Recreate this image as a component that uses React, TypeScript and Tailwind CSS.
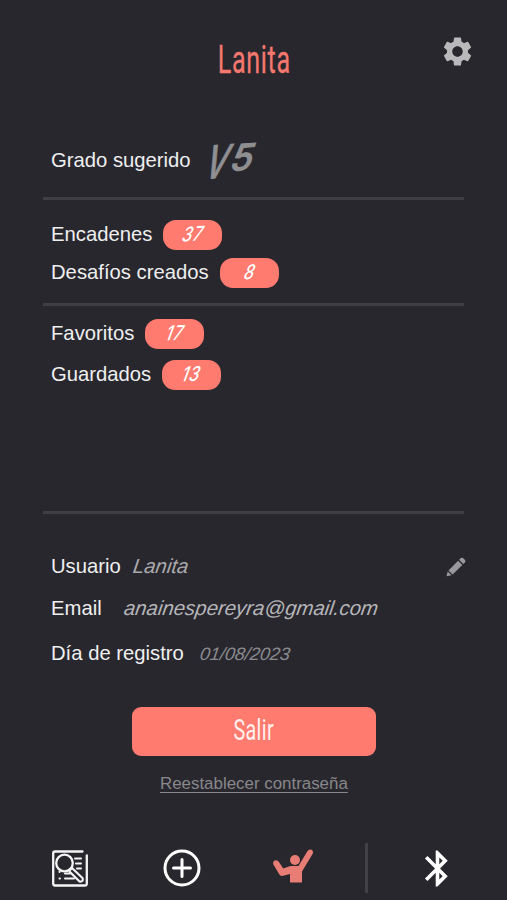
import type { ReactNode } from 'react';
import { MdSettings, MdBluetooth } from 'react-icons/md';

function Row({ label, labelWidth, className, children }: { label: string; labelWidth: string; className: string; children?: ReactNode }) {
  return (
    <div className={`flex items-center pl-[51px] pr-[41px] ${className}`}>
      <span className={`shrink-0 whitespace-nowrap pb-[2px] text-[20.25px] leading-[30px] text-[#efeff0] ${labelWidth}`}>{label}</span>
      {children}
    </div>
  );
}

function Pill({ value }: { value: string }) {
  return (
    <span className="flex h-[30px] w-[59px] shrink-0 items-center justify-center rounded-[13px] bg-[#ff7b6f]">
      <span className="inline-block -rotate-3 -skew-x-[28deg] scale-x-[0.8] pb-[1px] font-['Inter'] text-[20px] font-medium leading-[29px] tracking-[1px] text-white">{value}</span>
    </span>
  );
}

function Divider() {
  return <div className="ml-[43px] h-[3px] w-[421px] shrink-0 bg-[#3f3e44]" />;
}

function PencilIcon() {
  return (
    <svg width="20" height="20" viewBox="0 0 20 20" fill="#99999b">
      <path d="M.5 19.3 1.7 14.4 5.6 18.3Z" />
      <path d="M2.5 13.4 12.1 3.8 16.3 8 6.7 17.6Z" />
      <path d="M13.1 2.8 14.9 1.1Q16 .2 17 1.1L19 3.1Q19.9 4.1 19 5.2L17.3 7Z" />
    </svg>
  );
}

function SearchListIcon() {
  return (
    <svg width="36" height="37" viewBox="0 0 36 37" fill="none" stroke="#f4f4f5" strokeLinecap="round">
      <path d="M30.5 1.5H3Q1.2 1.5 1.2 3.5V33.5Q1.2 35.5 3 35.5H33Q34.8 35.5 34.8 33.5V5.5" strokeWidth="2.3" />
      <path d="M23 8.5H29M24 13.5H29M25 18.5H29M13 23.5H18M7.5 21.5V22M13 28.5H22M7.5 28.5H8" strokeWidth="2" />
      <circle cx="12.5" cy="13" r="8.3" strokeWidth="2.3" fill="#28272e" />
      <path d="M17.5 20.5 20 18 30.5 28Q31.8 32 27.5 31.5L17.5 21.5Z" strokeWidth="2.2" fill="#28272e" />
    </svg>
  );
}

function PlusIcon() {
  return (
    <svg width="38" height="38" viewBox="0 0 38 38" fill="none" stroke="#ffffff" strokeWidth="3" strokeLinecap="round">
      <circle cx="19" cy="19" r="17" />
      <path d="M10.5 19H27.5M19 10.5V27.5" />
    </svg>
  );
}

function ClimberIcon() {
  return (
    <svg width="40" height="34" viewBox="0 0 40 34" fill="#e77d74">
      <circle cx="22" cy="11" r="5" />
      <path d="M17.5 17H25.5L34.5 2Q36.1-.3 38.6.8 40.7 2.2 39.7 4.8L29 22.5V33.5H17V25L9 26.9Q7.4 27 6.4 25.6L.4 15.5Q-.6 12.6 1.8 11.4 4.3 10.6 5.8 12.8L10.2 19.5Z" />
    </svg>
  );
}

export default function App() {
  return (
    <main className="flex h-[900px] w-[507px] flex-col overflow-hidden bg-[#28272e] font-['Liberation_Sans',sans-serif]">
      <header className="flex h-[121px] shrink-0">
        <div className="w-[70px]" />
        <h1 className="flex w-[368px] justify-center pt-[38px]">
          <span className="inline-block scale-x-[0.66] font-['Roboto'] text-[38px] font-normal leading-[45px] tracking-[1px] text-[#f5786e] [-webkit-text-stroke:0.3px_#f5786e]">Lanita</span>
        </h1>
        <div className="pt-[34px]">
          <MdSettings size={35} color="#b9b9bb" className="ml-[2px]" />
        </div>
      </header>

      <Row label="Grado sugerido" labelWidth="w-[154px]" className="h-[76px] shrink-0 pt-[4px]">
        <span className="flex -translate-y-[2px] translate-x-[4px] -rotate-[4deg] -skew-x-[22deg] font-['Inter'] font-medium text-[#8f8f92] [-webkit-text-stroke:1px_#8f8f92]">
          <span className="-mx-[6px] translate-y-[2px] scale-x-[0.68] text-[45px] leading-[60px]">V</span>
          <span className="ml-[3px] translate-y-[2px] text-[36px] leading-[54px]">5</span>
        </span>
      </Row>
      <Divider />
      <Row label="Encadenes" labelWidth="w-[112px]" className="mt-[19px] h-[31px] shrink-0"><Pill value="37" /></Row>
      <Row label="Desafíos creados" labelWidth="w-[169px]" className="mt-[7px] h-[31px] shrink-0"><Pill value="8" /></Row>
      <div className="h-[15px] shrink-0" />
      <Divider />
      <Row label="Favoritos" labelWidth="w-[94px]" className="mt-[12px] h-[31px] shrink-0"><Pill value="17" /></Row>
      <Row label="Guardados" labelWidth="w-[111px]" className="mt-[10px] h-[31px] shrink-0"><Pill value="13" /></Row>
      <div className="h-[121px] shrink-0" />
      <Divider />
      <Row label="Usuario" labelWidth="w-[82px]" className="mt-[37px] h-[32px] shrink-0">
        <span className="-skew-x-[8deg] pb-[1px] text-[20.4px] italic text-[#a9a9ac]">Lanita</span>
        <span className="ml-auto"><PencilIcon /></span>
      </Row>
      <Row label="Email" labelWidth="w-[73px]" className="mt-[10px] h-[32px] shrink-0">
        <span className="-skew-x-[8deg] pb-[1px] text-[20.4px] italic text-[#b5b5b8]">anainespereyra@gmail.com</span>
      </Row>
      <Row label="Día de registro" labelWidth="w-[149px]" className="mt-[13px] h-[32px] shrink-0">
        <span className="-skew-x-[8deg] text-[18px] italic text-[#8b8b8e]">01/08/2023</span>
      </Row>

      <button className="ml-[132px] mt-[37px] flex h-[49px] w-[244px] shrink-0 items-center justify-center rounded-[9px] bg-[#ff7b6f]">
        <span className="inline-block scale-x-[0.66] pb-[3px] font-['Roboto'] text-[30px] font-normal leading-[46px] tracking-[0.5px] text-[#fff0ee]">Salir</span>
      </button>
      <a className="ml-[160px] mt-[16px] w-[188px] shrink-0 whitespace-nowrap text-[16.9px] leading-[24px] text-[#88888b] underline underline-offset-[3px]">Reestablecer contraseña</a>

      <nav className="mt-[47px] flex h-[50px] shrink-0 items-center pl-[52px]">
        <SearchListIcon />
        <span className="ml-[75px]"><PlusIcon /></span>
        <span className="mb-[4px] ml-[72px]"><ClimberIcon /></span>
        <span className="ml-[52px] h-[50px] w-[3px] bg-[#424147]" />
        <MdBluetooth size={43} color="#ffffff" className="ml-[48px]" />
      </nav>
    </main>
  );
}
